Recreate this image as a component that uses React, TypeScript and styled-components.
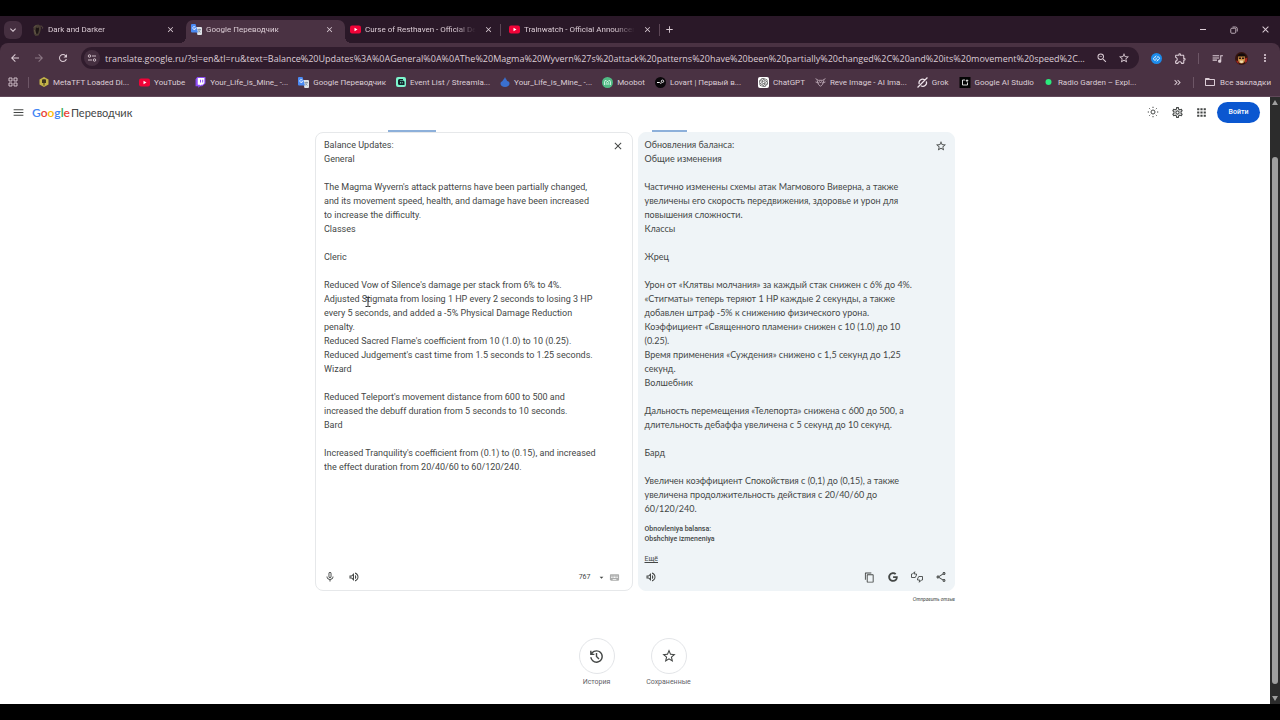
import React from "react";
import styled, { createGlobalStyle } from "styled-components";
import {
  MdArrowBack, MdArrowForward, MdRefresh, MdClose, MdAdd, MdExpandMore, MdZoomOut, MdStarBorder,
  MdOutlineExtension, MdQueueMusic, MdMoreVert, MdKeyboardDoubleArrowRight, MdFolderOpen, MdMenu,
  MdOutlineSettings, MdApps, MdMicNone, MdOutlineVolumeUp, MdArrowDropDown,
  MdKeyboard, MdContentCopy, MdOutlineShare,
} from "react-icons/md";
import { FaGoogle } from "react-icons/fa";
import { SiOpenai } from "react-icons/si";

const uiFont = `Roboto, "Noto Sans", sans-serif`;
const pageFont = `Lato, "Open Sans", sans-serif`;

const GlobalStyle = createGlobalStyle`
  * { box-sizing: border-box; }
  body { margin: 0; background: #000; }
  button, input, textarea { font: inherit; color: inherit; border: 0; padding: 0; margin: 0; background: none; outline: 0; }
  a { color: inherit; }
  svg { display: block; flex: none; }
`;

const Screen = styled.div`
  min-height: 100vh;
  padding: 16px 0;
  display: flex;
  flex-direction: column;
  background: #000;
`;

const Window = styled.div`
  flex: 1;
  display: flex;
  flex-direction: column;
  background: #2a1828;
  color: #dccdd6;
  font-family: ${uiFont};
`;

const TabStrip = styled.div`
  height: 27px;
  display: flex;
  align-items: center;
`;

const TabSearch = styled.button`
  width: 18px;
  height: 18px;
  margin: 0 5px 0 4px;
  display: grid;
  place-items: center;
  border-radius: 6px;
  background: #452f40;
`;

const TabBox = styled.div<{ $active?: boolean }>`
  position: relative;
  width: 159px;
  height: 23px;
  margin-top: 4px;
  padding: 0 3px 4px 5px;
  display: flex;
  align-items: center;
  gap: 4px;
  border-radius: 7px 7px 0 0;
  background: ${(p) => (p.$active ? "#4a3243" : "none")};
  font-size: 8px;

  &::before,
  &::after {
    content: "";
    display: ${(p) => (p.$active ? "block" : "none")};
    position: absolute;
    bottom: 0;
    width: 6px;
    height: 6px;
  }
  &::before {
    right: 100%;
    background: radial-gradient(circle at 0 0, transparent 6px, #4a3243 6px);
  }
  &::after {
    left: 100%;
    background: radial-gradient(circle at 100% 0, transparent 6px, #4a3243 6px);
  }
`;

const TabTitle = styled.span`
  flex: 1;
  margin-right: 2px;
  overflow: hidden;
  white-space: nowrap;
  mask-image: linear-gradient(to right, #000 80%, transparent 98%);
`;

const TabEnd = styled.span<{ $line?: boolean }>`
  width: 1px;
  height: 12px;
  margin-left: 3px;
  background: ${(p) => (p.$line ? "#5c4656" : "none")};
`;

const IconButton = styled.button<{ $size?: number; $dim?: boolean }>`
  width: ${(p) => p.$size ?? 12}px;
  height: ${(p) => p.$size ?? 12}px;
  flex: none;
  display: grid;
  place-items: center;
  opacity: ${(p) => (p.$dim ? 0.45 : 1)};
`;

const WindowControls = styled.div`
  margin-left: auto;
  padding-right: 9px;
  display: flex;
  gap: 19px;
`;

const Toolbar = styled.div`
  height: 30px;
  padding: 0 9px;
  display: flex;
  align-items: center;
  gap: 12px;
  border-radius: 8px 8px 0 0;
  background: #4a3243;
`;

const Omnibox = styled.div`
  flex: 1;
  height: 22px;
  margin: 0 -1px 0 0;
  padding: 0 9px 0 3px;
  display: flex;
  align-items: center;
  gap: 5px;
  border-radius: 11px;
  background: #301c2d;
`;

const SiteInfo = styled.button`
  width: 16px;
  height: 16px;
  display: grid;
  place-items: center;
  border-radius: 8px;
  background: #452f40;
`;

const Address = styled.input`
  flex: 1;
  min-width: 0;
  font-family: "Open Sans", sans-serif;
  font-size: 9px;
  text-overflow: ellipsis;
`;

const OmniActions = styled.div`
  display: flex;
  gap: 10px;
`;

const Divider = styled.span`
  width: 1px;
  height: 11px;
  flex: none;
  background: #6d5666;
`;

const Bookmarks = styled.nav`
  height: 24px;
  padding: 0 9px 5px 8px;
  display: flex;
  align-items: center;
  gap: 10px;
  font-size: 8px;
  background: #4a3243;
  border-bottom: 1px solid #61495a;
`;

const BookmarkLink = styled.a`
  display: flex;
  align-items: center;
  gap: 4px;
  white-space: nowrap;
  text-decoration: none;
`;

const BookmarkTail = styled.div`
  margin-left: auto;
  display: flex;
  align-items: center;
  gap: 10px;
`;

const Viewport = styled.div`
  flex: 1;
  display: flex;
  background: #fff;
  color: #444746;
  font-family: ${pageFont};
`;

const Page = styled.div`
  flex: 1;
  min-width: 0;
`;

const AppHeader = styled.header`
  height: 32px;
  padding: 0 10px 2px 12px;
  display: flex;
  align-items: center;
`;

const Brand = styled.a`
  margin-left: 8px;
  display: flex;
  align-items: center;
  gap: 1px;
  font-size: 11px;
  text-decoration: none;
`;

const Wordmark = styled.span`
  font-size: 12px;
  font-weight: 600;
`;

const Letter = styled.span<{ $color: string }>`
  color: ${(p) => p.$color};
`;

const HeaderActions = styled.div`
  margin-left: auto;
  display: flex;
  align-items: center;
  gap: 12px;
`;

const SignIn = styled.button`
  width: 43px;
  height: 21px;
  margin-left: -2px;
  border-radius: 11px;
  background: #0b57d0;
  color: #fff;
  font-family: Roboto, sans-serif;
  font-size: 7px;
  font-weight: 500;
`;

const Workspace = styled.main`
  max-width: 640px;
  margin: 0 auto;
`;

const Panels = styled.div`
  display: grid;
  grid-template-columns: 1fr 1fr;
  gap: 0 5px;
`;

const LanguageMark = styled.div<{ $start: number; $width: number }>`
  width: ${(p) => p.$width}px;
  height: 2px;
  margin: 1px 0 0 ${(p) => p.$start}px;
  background: #8db0da;
`;

const Panel = styled.section<{ $target?: boolean }>`
  min-height: 459px;
  padding: 5px ${(p) => (p.$target ? 7 : 8)}px 6px ${(p) => (p.$target ? 6 : 8)}px;
  display: flex;
  flex-direction: column;
  border: 1px solid ${(p) => (p.$target ? "#eff4f7" : "#e6e8ea")};
  border-radius: 8px;
  background: ${(p) => (p.$target ? "#eff4f7" : "#fff")};
  font-size: 9px;
  line-height: 14px;
`;

const PanelBody = styled.div`
  flex: 1;
  display: flex;
  align-items: flex-start;
  justify-content: space-between;
`;

const PanelAction = styled(IconButton)`
  margin-top: 2px;
`;

const SourceText = styled.textarea`
  flex: 1;
  resize: none;
  overflow: hidden;
  white-space: pre;
  font-family: Roboto, sans-serif;
`;

const Translation = styled.p`
  margin: 0;
  white-space: pre;
`;

const Romanized = styled.p`
  margin: 8px 0 0;
  font-family: Roboto, sans-serif;
  font-size: 7px;
  font-weight: 500;
  line-height: 10px;
  white-space: pre;
`;

const More = styled.button`
  margin-top: 8px;
  font-family: Roboto, sans-serif;
  font-size: 7px;
  text-decoration: underline;
`;

const PanelFooter = styled.div`
  height: 14px;
  display: flex;
  align-items: center;
  gap: 12px;
`;

const FooterEnd = styled.div<{ $gap: number; $inset?: number }>`
  margin-left: auto;
  padding-right: ${(p) => p.$inset ?? 0}px;
  display: flex;
  align-items: center;
  gap: ${(p) => p.$gap}px;
`;

const Count = styled.span`
  margin-right: 4px;
  font-family: Roboto, sans-serif;
  font-size: 7px;
`;

const Feedback = styled.a`
  display: block;
  margin-top: 3px;
  font-size: 5px;
  line-height: 10px;
  font-style: italic;
  text-align: right;
  text-decoration: none;
`;

const Shortcuts = styled.div`
  margin-top: 34px;
  padding-right: 5px;
  display: flex;
  justify-content: center;
`;

const Shortcut = styled.button`
  width: 72px;
  display: flex;
  flex-direction: column;
  align-items: center;
  gap: 3px;
  font-family: Roboto, sans-serif;
  font-size: 7px;
  line-height: 10px;
  color: #5f6368;
`;

const Circle = styled.span`
  width: 36px;
  height: 36px;
  display: grid;
  place-items: center;
  border: 1px solid #e3e5e8;
  border-radius: 50%;
  color: #444746;
`;

const Scrollbar = styled.div`
  width: 10px;
  padding: 3px 1px;
  display: flex;
  flex-direction: column;
  align-items: center;
  background: #2c2c2c;
`;

const Thumb = styled.div`
  flex: 1;
  width: 6px;
  margin: 52px 0 12px;
  border-radius: 3px;
  background: #9f9f9f;
`;

const Pointer = styled.svg`
  position: absolute;
  left: 364px;
  top: 296px;
`;

const TranslateIcon = () => (
  <svg width="11" height="11" viewBox="0 0 22 22">
    <path d="M9 6h11a2 2 0 0 1 2 2v12a2 2 0 0 1-2 2h-7z" fill="#dfe3e8" />
    <path d="M2 0h7l5 17H2a2 2 0 0 1-2-2V2a2 2 0 0 1 2-2z" fill="#4a8af4" />
    <path d="M9.500 7.300H6.800v1.500h1.400c-.2.800-.8 1.300-1.600 1.300a2.200 2.200 0 1 1 1.300-3.900l1-1A3.600 3.600 0 1 0 6.600 11.500c2 0 3-1.500 2.900-4.200z" fill="#fff" />
    <path d="M13 11h7M16.500 9.500V11M18.500 11c-.8 3-2.500 4.500-4 5.500M14.800 12.500c.8 2 2.500 3.500 4.200 4.500" stroke="#66788c" strokeWidth="1.200" fill="none" />
  </svg>
);

const YouTubeIcon = () => (
  <svg width="11" height="11" viewBox="0 0 22 22">
    <rect y="3" width="22" height="16" rx="4" fill="#f00338" />
    <path d="M9 7.500v7l6-3.500z" fill="#fff" />
  </svg>
);

const DarkerIcon = () => (
  <svg width="12" height="12" viewBox="0 0 24 24">
    <path d="M3 6l4-4 6-1 4 3 1 5-2 8-3 6-6 1-3-4-1-7z" fill="#4a3f35" />
    <path d="M8 7l3 1 3-1v5l-2 7-3 1-2-6z" fill="#1d1515" />
    <path d="M4 7l4-4M5 12l2 8M17 4c3 0 5 2 4 5" stroke="#6e604e" strokeWidth="1.500" fill="none" />
  </svg>
);

const TftIcon = () => (
  <svg width="10" height="10" viewBox="0 0 20 20">
    <path d="M10 0l9 5v10l-9 5-9-5V5z" fill="#c4b448" />
    <path d="M6 5h3v7H6zM11 5h3v7h-3zM9 4h2v13H9z" fill="#3c3420" />
  </svg>
);

const StreamIcon = () => (
  <svg width="10" height="10" viewBox="0 0 20 20">
    <rect width="20" height="20" rx="4" fill="#7df5cd" />
    <path d="M4 7a3 3 0 0 1 3-3h7v2H8v1h6a3 3 0 0 1 3 3v6H7a3 3 0 0 1-3-3z" fill="#12252b" />
    <path d="M9 10v3M12.500 10v3" stroke="#7df5cd" strokeWidth="1.500" />
  </svg>
);

const DropIcon = () => (
  <svg width="10" height="10" viewBox="0 0 20 20">
    <path d="M10 0c1 4 4 5 4 8 3 0 5 2 5 5 0 4-4 7-9 7s-9-3-9-7c0-3 2-4 4-5 1-3 4-4 5-8z" fill="#3a70cf" />
  </svg>
);

const MoobotIcon = () => (
  <svg width="11" height="11" viewBox="0 0 22 22">
    <circle cx="11" cy="11" r="11" fill="#50bb84" />
    <path d="M5 16v-6l2-4 3 3h2l3-3 2 4v6M7 14h8" stroke="#e6fff2" strokeWidth="1.600" fill="none" />
    <circle cx="9" cy="11.500" r="1" fill="#e6fff2" />
    <circle cx="13" cy="11.500" r="1" fill="#e6fff2" />
  </svg>
);

const LovartIcon = () => (
  <svg width="11" height="11" viewBox="0 0 22 22">
    <circle cx="11" cy="11" r="11" fill="#0b080b" />
    <path d="M4 11h5c1 0 2 3 4 1" stroke="#fff" strokeWidth="2" fill="none" />
    <circle cx="15" cy="8.500" r="2.400" stroke="#fff" strokeWidth="1.700" fill="none" />
  </svg>
);

const ReveIcon = () => (
  <svg width="11" height="11" viewBox="0 0 20 20" fill="none" stroke="#b9a6b3" strokeWidth="1.700">
    <path d="M1 3l5 3h8l5-3M4 6l2 7 4 4 4-4 2-7M1 9l6 2M19 9l-6 2M8 8l2 3 2-3" />
  </svg>
);

const GrokIcon = () => (
  <svg width="11" height="11" viewBox="0 0 20 20" fill="none" stroke="#eee3ea" strokeWidth="2.200">
    <path d="M14 5a6.800 6.800 0 0 0-10 8M17 8a6.800 6.800 0 0 1-10 8M1 19L19 1" />
  </svg>
);

const StudioIcon = () => (
  <svg width="12" height="11" viewBox="0 0 24 22">
    <rect x="1" width="22" height="22" fill="#050505" />
    <path d="M12 6H7v10h10v-5" stroke="#fff" strokeWidth="1.700" fill="none" />
    <path d="M16 4l1 2.500L19.500 7 17 8.500 16 11l-1-2.500L12.500 7 15 6.500z" fill="#fff" />
  </svg>
);

const RadioIcon = () => (
  <svg width="10" height="10" viewBox="0 0 20 20">
    <circle cx="9" cy="10" r="6" fill="#2bea7d" />
  </svg>
);

const ChatIcon = styled.span`
  width: 11px;
  height: 11px;
  margin-left: 7px;
  display: grid;
  place-items: center;
  border-radius: 2px;
  background: #fff;
  color: #333;
`;

const TwitchIcon = () => (
  <svg width="11" height="11" viewBox="0 0 20 20">
    <path d="M4 0h15v12l-6 5H9l-3 3v-3H1V4z" fill="#8c4bf5" />
    <path d="M5 2h12v9l-3 3h-3l-2 2v-2H5z" fill="#fff" />
    <path d="M10 5v5M14 5v5" stroke="#8c4bf5" strokeWidth="1.800" />
  </svg>
);

const TuneIcon = () => (
  <svg width="10" height="10" viewBox="0 0 20 20" fill="none" stroke="currentColor" strokeWidth="1.800">
    <circle cx="5" cy="6" r="2.500" />
    <circle cx="15" cy="14" r="2.500" />
    <path d="M10 6h8M2 14h8" />
  </svg>
);

const AppsGridIcon = () => (
  <svg width="10" height="10" viewBox="0 0 20 20" fill="none" stroke="currentColor" strokeWidth="1.800">
    <path d="M2 2h6v6H2zM12 2h6v6h-6zM2 12h6v6H2zM12 12h6v6h-6z" />
  </svg>
);

const RestoreIcon = () => (
  <svg width="8" height="8" viewBox="0 0 16 16" fill="none" stroke="currentColor" strokeWidth="1.600">
    <rect x="1.500" y="4.500" width="10" height="10" rx="2" />
    <path d="M5 2h6a3.500 3.500 0 0 1 3.500 3.500V11" />
  </svg>
);

const ShazamIcon = () => (
  <svg width="11" height="11" viewBox="0 0 22 22">
    <circle cx="11" cy="11" r="11" fill="#1c8bea" />
    <path d="M9.500 14c-2.500 1-4.500-.5-4.500-2.500 0-2 2-2.500 5-5.500M12.500 8c2.500-1 4.500.5 4.500 2.500 0 2-2 2.500-5 5.500M9.500 10.500l3 2.500" stroke="#fff" strokeWidth="1.800" fill="none" strokeLinecap="round" />
  </svg>
);

const AvatarIcon = () => (
  <svg width="13" height="13" viewBox="0 0 26 26">
    <circle cx="13" cy="13" r="13" fill="#35140f" />
    <path d="M5 7c2-5 14-6 16 0l-1 3H6z" fill="#120a0a" />
    <path d="M6 9h14v7c0 5-4 7-7 7s-7-2-7-7z" fill="#cb8f45" />
    <path d="M7 11h5v3H8zM14 11h5l-1 3h-4z" fill="#2a1712" />
    <path d="M9 17h8l-2 5h-4z" fill="#efdcae" />
    <path d="M20 13l5-2-1 8-4 3zM2 17l4 1 2 6-4-3z" fill="#a8261d" />
  </svg>
);

const SunIcon = () => (
  <svg width="12" height="12" viewBox="0 0 24 24" fill="none" stroke="currentColor" strokeWidth="2">
    <circle cx="12" cy="12" r="4" />
    <path d="M12 1.500v2.500M12 20v2.500M1.500 12H4M20 12h2.500M4.600 4.600l1.700 1.700M17.700 17.700l1.700 1.700M4.600 19.400l1.700-1.700M17.700 6.300l1.700-1.700" />
  </svg>
);

const HistoryIcon = () => (
  <svg width="17" height="17" viewBox="0 -960 960 960" fill="currentColor">
    <path d="M480-120q-138 0-240.500-91.500T122-440h82q14 104 92.500 172T480-200q117 0 198.500-81.500T760-480q0-117-81.500-198.500T480-760q-69 0-129 32t-101 88h110v80H120v-240h80v94q51-64 124.500-99T480-840q75 0 140.500 28.500t114 77q48.500 48.500 77 114T840-480q0 75-28.500 140.500t-77 114q-48.500 48.500-114 77T480-120Zm112-192L440-464v-216h80v184l128 128-56 56Z" />
  </svg>
);

const RatingIcon = () => (
  <svg width="12" height="12" viewBox="0 0 24 24" fill="none" stroke="currentColor" strokeWidth="1.800" strokeLinejoin="round">
    <path d="M1 6v7h7.500l2.500-5V6H6.500l1-4.500L3 6z" />
    <path d="M23 18v-7h-7.500L13 16v2h4.500l-1 4.500L21 18z" />
  </svg>
);

const tabs = [
  { title: "Dark and Darker", icon: <DarkerIcon /> },
  { title: "Google Переводчик", icon: <TranslateIcon />, active: true },
  { title: "Curse of Resthaven - Official De", icon: <YouTubeIcon />, line: true },
  { title: "Trainwatch - Official Announcer", icon: <YouTubeIcon />, line: true },
];

const bookmarks = [
  { title: "MetaTFT Loaded Di...", icon: <TftIcon /> },
  { title: "YouTube", icon: <YouTubeIcon /> },
  { title: "Your_Life_is_Mine_ -...", icon: <TwitchIcon /> },
  { title: "Google Переводчик", icon: <TranslateIcon /> },
  { title: "Event List / Streamla...", icon: <StreamIcon /> },
  { title: "Your_Life_is_Mine_ -...", icon: <DropIcon /> },
  { title: "Moobot", icon: <MoobotIcon /> },
  { title: "Lovart | Первый в...", icon: <LovartIcon /> },
  { title: "ChatGPT", icon: <ChatIcon><SiOpenai size={9} /></ChatIcon> },
  { title: "Reve Image - AI Ima...", icon: <ReveIcon /> },
  { title: "Grok", icon: <GrokIcon /> },
  { title: "Google AI Studio", icon: <StudioIcon /> },
  { title: "Radio Garden – Expl...", icon: <RadioIcon /> },
];

const address =
  "translate.google.ru/?sl=en&tl=ru&text=Balance%20Updates%3A%0AGeneral%0A%0AThe%20Magma%20Wyvern%27s%20attack%20patterns%20have%20been%20partially%20changed%2C%20and%20its%20movement%20speed%2C%2...";

const sourceText = `Balance Updates:
General

The Magma Wyvern's attack patterns have been partially changed,
and its movement speed, health, and damage have been increased
to increase the difficulty.
Classes

Cleric

Reduced Vow of Silence's damage per stack from 6% to 4%.
Adjusted Stigmata from losing 1 HP every 2 seconds to losing 3 HP
every 5 seconds, and added a -5% Physical Damage Reduction
penalty.
Reduced Sacred Flame's coefficient from 10 (1.0) to 10 (0.25).
Reduced Judgement's cast time from 1.5 seconds to 1.25 seconds.
Wizard

Reduced Teleport's movement distance from 600 to 500 and
increased the debuff duration from 5 seconds to 10 seconds.
Bard

Increased Tranquility's coefficient from (0.1) to (0.15), and increased
the effect duration from 20/40/60 to 60/120/240.`;

const translation = `Обновления баланса:
Общие изменения

Частично изменены схемы атак Магмового Виверна, а также
увеличены его скорость передвижения, здоровье и урон для
повышения сложности.
Классы

Жрец

Урон от «Клятвы молчания» за каждый стак снижен с 6% до 4%.
«Стигматы» теперь теряют 1 HP каждые 2 секунды, а также
добавлен штраф -5% к снижению физического урона.
Коэффициент «Священного пламени» снижен с 10 (1.0) до 10
(0.25).
Время применения «Суждения» снижено с 1,5 секунд до 1,25
секунд.
Волшебник

Дальность перемещения «Телепорта» снижена с 600 до 500, а
длительность дебаффа увеличена с 5 секунд до 10 секунд.

Бард

Увеличен коэффициент Спокойствия с (0,1) до (0,15), а также
увеличена продолжительность действия с 20/40/60 до
60/120/240.`;

const wordmark: [string, string][] = [
  ["G", "#4285f4"], ["o", "#ea4335"], ["o", "#fbbc05"], ["g", "#4285f4"], ["l", "#34a853"], ["e", "#ea4335"],
];

export default function App() {
  return (
    <Screen>
      <GlobalStyle />
      <Window>
        <TabStrip>
          <TabSearch aria-label="Поиск вкладок"><MdExpandMore size={12} /></TabSearch>
          {tabs.map((t) => (
            <TabBox key={t.title} $active={t.active}>
              {t.icon}
              <TabTitle>{t.title}</TabTitle>
              <IconButton $size={9} aria-label="Закрыть вкладку"><MdClose size={9} /></IconButton>
              <TabEnd $line={t.line} />
            </TabBox>
          ))}
          <IconButton aria-label="Новая вкладка"><MdAdd size={11} /></IconButton>
          <WindowControls>
            <IconButton aria-label="Свернуть">
              <svg width="8" height="8" viewBox="0 0 8 8"><path d="M1 3.500h6" stroke="currentColor" /></svg>
            </IconButton>
            <IconButton aria-label="Восстановить"><RestoreIcon /></IconButton>
            <IconButton aria-label="Закрыть"><MdClose size={11} /></IconButton>
          </WindowControls>
        </TabStrip>

        <Toolbar>
          <IconButton aria-label="Назад"><MdArrowBack size={12} /></IconButton>
          <IconButton aria-label="Вперёд" $dim><MdArrowForward size={12} /></IconButton>
          <IconButton aria-label="Обновить"><MdRefresh size={12} /></IconButton>
          <Omnibox>
            <SiteInfo aria-label="Сведения о сайте"><TuneIcon /></SiteInfo>
            <Address aria-label="Адресная строка" defaultValue={address} />
            <OmniActions>
              <IconButton aria-label="Масштаб"><MdZoomOut size={12} /></IconButton>
              <IconButton aria-label="Добавить в закладки"><MdStarBorder size={12} /></IconButton>
            </OmniActions>
          </Omnibox>
          <IconButton aria-label="Shazam"><ShazamIcon /></IconButton>
          <IconButton aria-label="Расширения"><MdOutlineExtension size={13} /></IconButton>
          <Divider />
          <IconButton aria-label="Медиа"><MdQueueMusic size={13} /></IconButton>
          <IconButton aria-label="Профиль"><AvatarIcon /></IconButton>
          <IconButton aria-label="Меню"><MdMoreVert size={12} /></IconButton>
        </Toolbar>

        <Bookmarks>
          <IconButton $size={10} aria-label="Приложения"><AppsGridIcon /></IconButton>
          <Divider />
          {bookmarks.map((b, i) => (
            <BookmarkLink key={i} href="#">{b.icon}{b.title}</BookmarkLink>
          ))}
          <BookmarkTail>
            <IconButton aria-label="Ещё закладки"><MdKeyboardDoubleArrowRight size={11} /></IconButton>
            <Divider />
            <BookmarkLink href="#"><MdFolderOpen size={12} />Все закладки</BookmarkLink>
          </BookmarkTail>
        </Bookmarks>

        <Viewport>
          <Page>
            <AppHeader>
              <IconButton aria-label="Главное меню"><MdMenu size={13} /></IconButton>
              <Brand href="#">
                <Wordmark>
                  {wordmark.map(([ch, color], i) => <Letter key={i} $color={color}>{ch}</Letter>)}
                </Wordmark>
                Переводчик
              </Brand>
              <HeaderActions>
                <IconButton aria-label="Тема"><SunIcon /></IconButton>
                <IconButton aria-label="Настройки"><MdOutlineSettings size={13} /></IconButton>
                <IconButton aria-label="Приложения Google"><MdApps size={13} /></IconButton>
                <SignIn>Войти</SignIn>
              </HeaderActions>
            </AppHeader>

            <Workspace>
              <Panels>
                <LanguageMark $start={73} $width={48} />
                <LanguageMark $start={14} $width={35} />
                <Panel>
                  <PanelBody>
                    <SourceText aria-label="Исходный текст" rows={27} defaultValue={sourceText} />
                    <PanelAction aria-label="Очистить"><MdClose size={12} /></PanelAction>
                  </PanelBody>
                  <PanelFooter>
                    <IconButton aria-label="Голосовой ввод"><MdMicNone size={12} /></IconButton>
                    <IconButton aria-label="Прослушать"><MdOutlineVolumeUp size={12} /></IconButton>
                    <FooterEnd $gap={1} $inset={3}>
                      <Count>767</Count>
                      <IconButton aria-label="Способ ввода"><MdArrowDropDown size={9} /></IconButton>
                      <IconButton aria-label="Клавиатура" $dim><MdKeyboard size={11} /></IconButton>
                    </FooterEnd>
                  </PanelFooter>
                </Panel>
                <Panel $target>
                  <PanelBody>
                    <div>
                      <Translation>{translation}</Translation>
                      <Romanized>{"Obnovleniya balansa:\nObshchiye izmeneniya"}</Romanized>
                      <More>Ещё</More>
                    </div>
                    <PanelAction aria-label="Сохранить перевод"><MdStarBorder size={12} /></PanelAction>
                  </PanelBody>
                  <PanelFooter>
                    <IconButton aria-label="Прослушать перевод"><MdOutlineVolumeUp size={12} /></IconButton>
                    <FooterEnd $gap={12}>
                      <IconButton aria-label="Копировать"><MdContentCopy size={11} /></IconButton>
                      <IconButton aria-label="Искать в Google"><FaGoogle size={10} /></IconButton>
                      <IconButton aria-label="Оценить перевод"><RatingIcon /></IconButton>
                      <IconButton aria-label="Поделиться"><MdOutlineShare size={12} /></IconButton>
                    </FooterEnd>
                  </PanelFooter>
                </Panel>
              </Panels>
              <Feedback href="#">Отправить отзыв</Feedback>
              <Shortcuts>
                <Shortcut><Circle><HistoryIcon /></Circle>История</Shortcut>
                <Shortcut><Circle><MdStarBorder size={16} /></Circle>Сохраненные</Shortcut>
              </Shortcuts>
            </Workspace>
          </Page>
          <Scrollbar>
            <svg width="6" height="5" viewBox="0 0 6 5"><path d="M3 0l3 5H0z" fill="#9f9f9f" /></svg>
            <Thumb />
            <svg width="6" height="5" viewBox="0 0 6 5"><path d="M3 5L0 0h6z" fill="#9f9f9f" /></svg>
          </Scrollbar>
        </Viewport>
      </Window>
      <Pointer width="8" height="12" viewBox="0 0 8 12" fill="none" stroke="#333">
        <path d="M1.500 1.500h2l.5.500.5-.5h2M4 2v8M1.500 10.500h2L4 10l.5.500h2" />
      </Pointer>
    </Screen>
  );
}
